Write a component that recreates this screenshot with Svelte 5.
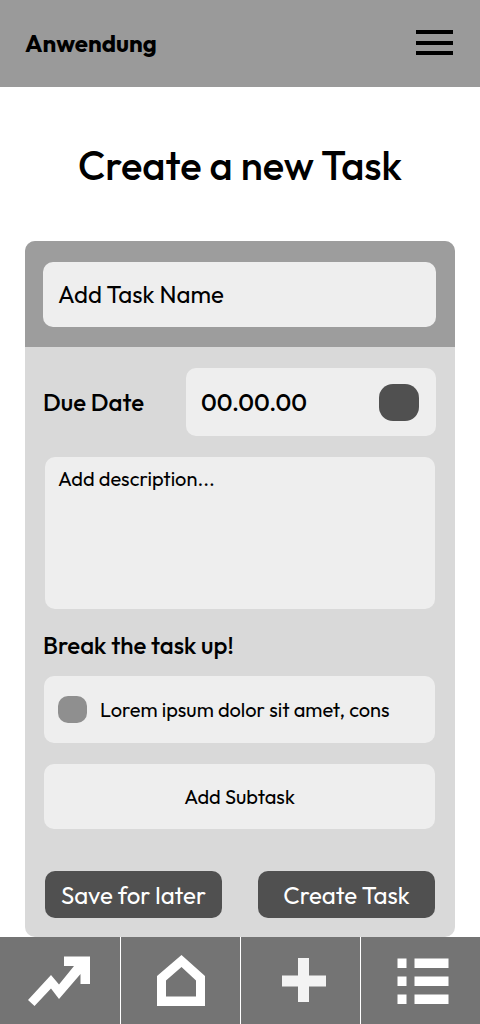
<script>
  let taskName = $state('');
  let dueDate = $state('');
  let description = $state('');
  let subtasks = $state([{ text: 'Lorem ipsum dolor sit amet, cons', done: false }]);

  const addSubtask = () => {
    subtasks.push({ text: 'Lorem ipsum dolor sit amet, cons', done: false });
  };
</script>

<div class="page">
  <header class="topbar">
    <a class="brand" href="#home">Anwendung</a>
    <button class="menu" type="button" aria-label="Menu">
      <svg width="37" height="25" viewBox="0 0 37 25">
        <path d="M0 0h37v4H0zM0 11h37v4H0zM0 21h37v4H0z" />
      </svg>
    </button>
  </header>

  <main>
    <h1>Create a new Task</h1>

    <form class="card" onsubmit={(e) => e.preventDefault()}>
      <div class="card-head">
        <input
          class="field name"
          type="text"
          aria-label="Task name"
          placeholder="Add Task Name"
          bind:value={taskName}
        />
      </div>

      <div class="card-body">
        <div class="due">
          <label for="due-date">Due Date</label>
          <div class="field date">
            <input id="due-date" type="text" placeholder="00.00.00" bind:value={dueDate} />
            <button class="picker" type="button" aria-label="Pick a date"></button>
          </div>
        </div>

        <textarea
          class="field description"
          aria-label="Description"
          placeholder="Add description..."
          bind:value={description}
        ></textarea>

        <h2>Break the task up!</h2>

        <div class="subtasks">
          {#each subtasks as subtask}
            <label class="field subtask">
              <input type="checkbox" bind:checked={subtask.done} />
              <span>{subtask.text}</span>
            </label>
          {/each}
          <button class="field add" type="button" onclick={addSubtask}>Add Subtask</button>
        </div>

        <div class="actions">
          <button type="button">Save for later</button>
          <button type="submit">Create Task</button>
        </div>
      </div>
    </form>
  </main>

  <nav class="tabs">
    <a href="#stats" aria-label="Statistics">
      <svg width="64" height="53" viewBox="0 0 64 53">
        <path d="M0 46L23 21L31 30.5L46 12H36V2.5H62V30H52.5V20L31 45L23 34.5L6.5 52Z" />
      </svg>
    </a>
    <a href="#home" aria-label="Home">
      <svg width="64" height="53" viewBox="0 0 64 53">
        <path fill-rule="evenodd" d="M32.5 1L56 22V52H8V22ZM32.5 13L17 26.5V42.5H47V26.5Z" />
      </svg>
    </a>
    <a class="new" href="#new" aria-label="New task">
      <svg width="64" height="53" viewBox="0 0 64 53">
        <path d="M29 4h11v17.5h17v11H40V48H29V32.5H13v-11h16z" />
      </svg>
    </a>
    <a href="#list" aria-label="Task list">
      <svg width="64" height="53" viewBox="0 0 64 53">
        <path
          d="M8.500 4.500h9v9.500h-9zM25.500 4.500h34v9.500h-34zM8.500 22.500h9v9.500h-9zM25.500 22.500h34v9.500h-34zM8.500 40.500h9v9.500h-9zM25.500 40.500h34v9.500h-34z"
        />
      </svg>
    </a>
  </nav>
</div>

<style>
  :global(body) {
    margin: 0;
    background: #fff;
  }
  .page {
    display: flex;
    flex-direction: column;
    min-height: 100vh;
    color: #000;
    font-family: Outfit, Lato, sans-serif;
  }
  .page * {
    box-sizing: border-box;
  }
  button,
  input,
  textarea {
    margin: 0;
    padding: 0;
    border: 0;
    color: inherit;
    font: inherit;
  }
  button {
    cursor: pointer;
  }
  svg {
    display: block;
  }

  .topbar {
    display: flex;
    align-items: center;
    justify-content: space-between;
    height: 87px;
    padding: 0 27px 2px 25px;
    background: #9a9a9a;
  }
  .brand {
    color: inherit;
    font-size: 24px;
    font-weight: 700;
    text-decoration: none;
  }
  .menu {
    background: none;
  }

  main {
    padding: 0 25px;
  }
  h1 {
    margin: 54px 0 52px;
    font-size: 40px;
    font-weight: 500;
    line-height: 48px;
    text-align: center;
  }

  .card {
    overflow: hidden;
    border-radius: 10px;
    background: #d9d9d9;
  }
  .card-head {
    padding: 21px 19px 20px 18px;
    background: #9d9d9d;
  }
  .card-body {
    padding: 21px 20px 19px;
  }
  .field {
    width: 100%;
    border-radius: 10px;
    background: #eee;
  }
  ::placeholder {
    color: #000;
    opacity: 1;
  }
  .name {
    display: block;
    height: 65px;
    padding: 0 15px 2px;
    font-size: 24px;
  }

  .due {
    display: flex;
    align-items: center;
    gap: 42px;
    margin: 0 -1px 21px -2px;
    font-size: 24px;
    font-weight: 500;
  }
  .due label {
    flex: none;
  }
  .date {
    display: flex;
    flex: 1;
    align-items: center;
    min-width: 0;
    height: 68px;
    padding: 0 17px 0 15px;
  }
  .date input {
    flex: 1;
    min-width: 0;
    background: none;
  }
  .picker {
    width: 40px;
    height: 37px;
    border-radius: 14px;
    background: #505050;
  }

  .description {
    display: block;
    height: 152px;
    padding: 10px 13px;
    font-size: 20px;
    line-height: 24px;
    resize: none;
  }
  h2 {
    margin: 21px 0 16px -2px;
    font-size: 24px;
    font-weight: 500;
    line-height: 30px;
  }

  .subtasks {
    display: flex;
    flex-direction: column;
    gap: 21px;
    margin-left: -1px;
    font-size: 20px;
  }
  .subtask {
    display: flex;
    align-items: center;
    gap: 13px;
    height: 67px;
    padding: 0 14px;
  }
  .subtask input {
    flex: none;
    width: 29px;
    height: 27px;
    border-radius: 10px;
    background: #8f8f8f;
    appearance: none;
  }
  .subtask input:checked {
    background: #505050;
  }
  .add {
    height: 65px;
  }

  .actions {
    display: flex;
    gap: 36px;
    margin-top: 42px;
  }
  .actions button {
    flex: 1;
    height: 47px;
    border-radius: 10px;
    background: #505050;
    color: #fff;
    font-size: 24px;
  }

  .tabs {
    display: grid;
    grid-template-columns: repeat(4, 1fr);
    height: 87px;
    margin-top: auto;
    background: #747474;
  }
  .tabs a {
    display: flex;
    align-items: center;
    justify-content: center;
  }
  .tabs a + a {
    border-left: 1px solid #fff;
  }
  .tabs path {
    fill: #fff;
  }
  .tabs .new path {
    fill: #f3f3f3;
  }
</style>
